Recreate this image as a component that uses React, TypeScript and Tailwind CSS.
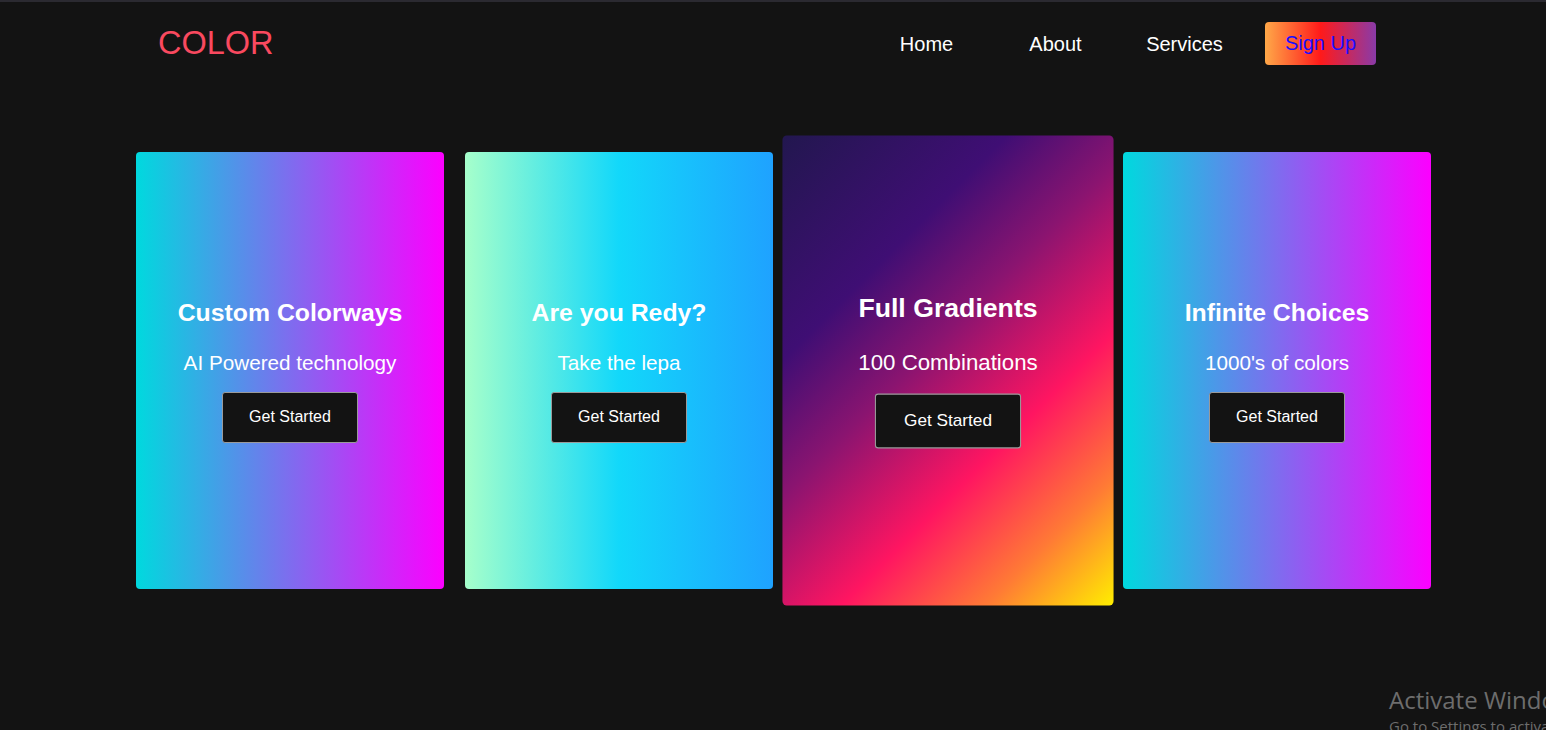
import React from "react";

const cards = [
  {
    title: "Custom Colorways",
    text: "AI Powered technology",
    bg: "bg-[linear-gradient(90deg,#00d9de_0%,#fc00ff_100%)]",
    big: false,
  },
  {
    title: "Are you Redy?",
    text: "Take the lepa",
    bg: "bg-[linear-gradient(90deg,#a6ffcb_0%,#12d8fa_50%,#1fa2ff_100%)]",
    big: false,
  },
  {
    title: "Full Gradients",
    text: "100 Combinations",
    bg: "bg-[linear-gradient(135deg,#22174f_0%,#3f0e74_28%,#8a1470_45%,#ff1561_66%,#ff7a35_84%,#ffee00_100%)]",
    big: true,
  },
  {
    title: "Infinite Choices",
    text: "1000's of colors",
    bg: "bg-[linear-gradient(90deg,#00d9de_0%,#fc00ff_100%)]",
    big: false,
  },
];

function Card({ title, text, bg, big }: (typeof cards)[number]) {
  return (
    <div
      className={`flex h-[437px] w-[308px] shrink-0 flex-col items-center justify-center rounded-[4px] ${bg} ${
        big ? "scale-[1.075]" : ""
      }`}
    >
      <h2 className="text-[24.8px] leading-[28px] font-bold text-white">{title}</h2>
      <p className="mt-[24px] text-[20.7px] leading-[24px] text-white">{text}</p>
      <button className="mt-[17px] h-[51px] w-[136px] rounded-[3px] border border-[#9a9a9a] bg-[#131313] text-[16px] text-white">
        Get Started
      </button>
    </div>
  );
}

export default function App() {
  return (
    <div className="relative h-[730px] overflow-hidden border-t-2 border-[#2b2a31] bg-[#131313] font-['Liberation_Sans',Arial,sans-serif]">
      <nav className="flex h-[84px] items-center justify-between pr-[170px] pl-[158px]">
        <div className="-mt-[1px] text-[32.5px] text-[#f9495f]">COLOR</div>
        <div className="flex items-center">
          <a className="w-[129px] text-center text-[20px] text-white">Home</a>
          <a className="w-[129px] text-center text-[20px] text-white">About</a>
          <a className="w-[129px] text-center text-[20px] text-white">Services</a>
          <button className="ml-[16px] -mt-[2px] h-[43px] w-[111px] rounded-[4px] bg-[linear-gradient(90deg,#ffa848_0%,#ff1a1a_50%,#8a3aa8_100%)] text-[20px] text-[#1a0dff]">
            Sign Up
          </button>
        </div>
      </nav>

      <main className="flex gap-[21px] pt-[66px] pl-[136px]">
        {cards.map((c) => (
          <Card key={c.title} {...c} />
        ))}
      </main>

      <div className="pointer-events-none absolute top-[682px] left-[1389px] font-['Open_Sans',sans-serif] whitespace-nowrap text-[#6d6d6d]">
        <div className="text-[24px] leading-[32px]">Activate Windows</div>
        <div className="text-[15px] leading-[20px]">Go to Settings to activate Windows.</div>
      </div>
    </div>
  );
}
